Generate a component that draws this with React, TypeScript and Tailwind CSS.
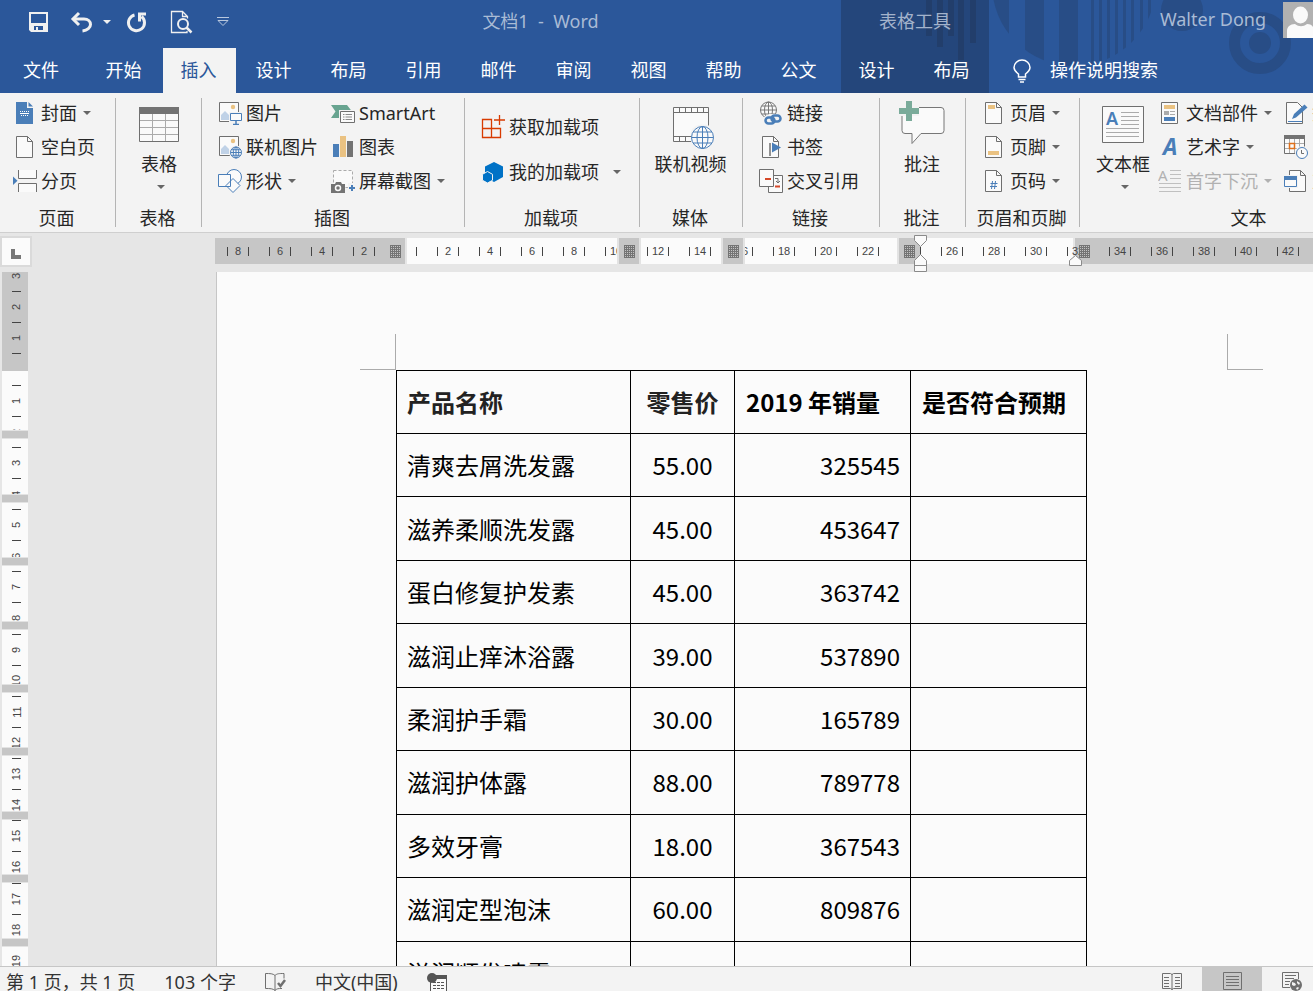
import type { ReactNode } from "react"

const BLUE = "#4a7eb8"
const GRAY = "#6f6f6f"
const YELLOW = "#eac282"

const tabs = ["开始", "插入", "设计", "布局", "引用", "邮件", "审阅", "视图", "帮助", "公文"]

const products = [
  { name: "清爽去屑洗发露", price: "55.00", sales: "325545" },
  { name: "滋养柔顺洗发露", price: "45.00", sales: "453647" },
  { name: "蛋白修复护发素", price: "45.00", sales: "363742" },
  { name: "滋润止痒沐浴露", price: "39.00", sales: "537890" },
  { name: "柔润护手霜", price: "30.00", sales: "165789" },
  { name: "滋润护体露", price: "88.00", sales: "789778" },
  { name: "多效牙膏", price: "18.00", sales: "367543" },
  { name: "滋润定型泡沫", price: "60.00", sales: "809876" },
  { name: "滋润顺发喷雾", price: "28.00", sales: "297876" },
]

const rulerX = [8, 6, 4, 2, 0, 2, 4, 6, 8, 10, 12, 14, 16, 18, 20, 22, 24, 26, 28, 30, 32, 34, 36, 38, 40, 42]
const rulerY = [3, 2, 1, 0, 1, 2, 3, 4, 5, 6, 7, 8, 9, 10, 11, 12, 13, 14, 15, 16, 17, 18, 19]

function Icon({ children }: { children: ReactNode }) {
  return (
    <svg width="24" height="24" viewBox="0 0 24 24" fill="none" className="shrink-0" aria-hidden="true">
      {children}
    </svg>
  )
}

function BigIcon({ children }: { children: ReactNode }) {
  return (
    <svg width="46" height="50" viewBox="0 0 46 50" fill="none" className="shrink-0" aria-hidden="true">
      {children}
    </svg>
  )
}

function Caret({ className = "" }: { className?: string }) {
  return (
    <svg width="8" height="4" viewBox="0 0 8 4" className={`shrink-0 ${className}`} aria-hidden="true">
      <path d="M0 0h8L4 4z" fill="currentColor" />
    </svg>
  )
}

function Doc() {
  return (
    <>
      <path d="M3.5 1.5h11l5 5v16h-16z" fill="#fafafa" stroke={GRAY} />
      <path d="M14.5 1.5v5h5" stroke={GRAY} />
    </>
  )
}

function Globe({ x, y, r, color }: { x: number; y: number; r: number; color: string }) {
  return (
    <g stroke={color} fill="none">
      <circle cx={x} cy={y} r={r} fill="#fafafa" />
      <ellipse cx={x} cy={y} rx={r / 2} ry={r} />
      <path d={`M${x} ${y - r}v${r * 2}M${x - r} ${y}h${r * 2}`} />
      <path d={`M${x - r * 0.85} ${y - r / 2}h${r * 1.7}M${x - r * 0.85} ${y + r / 2}h${r * 1.7}`} />
    </g>
  )
}

function Picture() {
  return (
    <>
      <path d="M1.5 1.5h19v19h-19z" fill="#fafafa" stroke={GRAY} />
      <circle cx="15" cy="6" r="2.2" fill={YELLOW} />
      <path d="M3 19v-5l4-4 4 4v5z" fill="#c0d2e7" />
    </>
  )
}

interface ToolProps {
  icon: ReactNode
  label: string
  menu?: boolean
  wide?: boolean
  disabled?: boolean
}

function Tool({ icon, label, menu, wide, disabled }: ToolProps) {
  return (
    <button
      disabled={disabled}
      className="flex h-[34px] items-center gap-1 whitespace-nowrap text-[#262626] disabled:text-[#b1b1b1]"
    >
      <Icon>{icon}</Icon>
      {label}
      {menu && <Caret className={wide ? "ml-[10px] text-[#666]" : disabled ? "ml-[2px]" : "ml-[2px] text-[#666]"} />}
    </button>
  )
}

function BigTool({ icon, label, menu }: ToolProps) {
  return (
    <button className="flex flex-col items-center pt-[5px] whitespace-nowrap">
      <BigIcon>{icon}</BigIcon>
      <span className="leading-[26px]">{label}</span>
      {menu && <Caret className="mt-2 ml-1 text-[#666]" />}
    </button>
  )
}

function Group({ label, className, children }: { label: string; className: string; children: ReactNode }) {
  return (
    <section aria-label={label} className={`relative flex shrink-0 flex-col ${className}`}>
      <div className="flex h-[111px] pt-[3px]">{children}</div>
      <h2 className="pr-[3px] text-center leading-[28px]">{label}</h2>
      <div className="absolute top-[5px] right-0 bottom-[5px] w-px bg-[#b4b4b4]" />
    </section>
  )
}

function HeaderArt() {
  return (
    <svg width="472" height="93" viewBox="841 0 472 93" className="absolute top-0 left-[841px]" aria-hidden="true">
      <defs>
        <clipPath id="disc">
          <circle cx="1074" cy="-16" r="82" />
        </clipPath>
      </defs>
      <path d="M841 0h148v93H841z" fill="#24467b" />
      <path
        d="M926 0h6v36h-6zM937 0h6v47h-6zM948 0h6v36h-6zM958 0h6v60h-6zM970 0h6v43h-6z"
        fill="#223e6b"
      />
      <g fill="#284d86">
        <path
          clipPath="url(#disc)"
          d="M990 0h19v90h-19zM1025 0h19v90h-19zM1059 0h19v90h-19zM1091 0h3v90h-3zM1099 0h3v90h-3zM1107 0h3v90h-3zM1115 0h3v90h-3zM1123 0h3v90h-3zM1131 0h3v90h-3zM1140 0h3v90h-3zM1148 0h3v90h-3z"
        />
        <circle cx="1182" cy="10" r="21" />
        <circle cx="1260" cy="43" r="11" />
      </g>
      <circle cx="1260" cy="43" r="25.5" fill="none" stroke="#284d86" strokeWidth="11" />
    </svg>
  )
}

function QuickAccess() {
  return (
    <div className="flex w-[240px] items-center pl-[28px] text-[#f0f0f0]">
      <button aria-label="保存">
        <svg width="20" height="20" viewBox="0 0 20 20">
          <path d="M1 0h19v20H3l-2-2zM3 2v9h15V2zM6 14v4h2v-3h2v3h5v-4z" fill="currentColor" fillRule="evenodd" />
        </svg>
      </button>
      <button aria-label="撤消" className="ml-[22px] flex items-center gap-[10px]">
        <svg width="23" height="22" viewBox="0 0 23 22" fill="none" stroke="currentColor" strokeWidth="3">
          <path d="M9 2L3 8l6 6" />
          <path d="M3 8h11c4 0 6.500 2.500 6.500 5.500S17.500 19.500 12.500 20" />
        </svg>
        <Caret />
      </button>
      <button aria-label="重复" className="ml-[15px]">
        <svg width="21" height="22" viewBox="0 0 21 22" fill="none" stroke="currentColor" strokeWidth="3">
          <path d="M8.500 4A8 8 0 1 0 15.500 5.500" />
          <path d="M13.500 10.500V3H20" />
        </svg>
      </button>
      <button aria-label="打印预览" className="ml-[23px]">
        <svg width="23" height="24" viewBox="0 0 23 24" fill="none" stroke="currentColor">
          <path d="M17 21v1.500H1.500V1.500h11l5 5v2M12.500 1.500v5h5" strokeWidth="1.300" />
          <circle cx="13" cy="14" r="5" strokeWidth="2" />
          <path d="M16.500 17.500l5 5" strokeWidth="2.500" />
        </svg>
      </button>
      <button aria-label="自定义快速访问工具栏" className="ml-[24px] text-[#b9c8de]">
        <svg width="12" height="10" viewBox="0 0 12 10" fill="none" stroke="currentColor">
          <path d="M0 .500h12M1 3.500h10L6 8.500z" />
        </svg>
      </button>
    </div>
  )
}

function Header() {
  return (
    <header className="relative flex h-[93px] shrink-0 overflow-hidden bg-[#2b579a] text-white">
      <HeaderArt />
      <div className="relative flex w-[841px] shrink-0 flex-col">
        <div className="flex h-12 pb-[5px]">
          <QuickAccess />
          <h1 className="flex-1 self-center text-center whitespace-pre text-[#a9bbd5]">文档1  -  Word</h1>
        </div>
        <nav className="flex flex-1 gap-[2px]">
          <button className="mr-1 w-[82px]">文件</button>
          {tabs.map((tab) => (
            <button key={tab} className={tab === "插入" ? "w-[73px] bg-[#f3f3f3] pr-[2px] text-[#2b579a]" : "w-[73px] pr-[2px]"}>
              {tab}
            </button>
          ))}
        </nav>
      </div>
      <div className="relative flex w-[148px] shrink-0 flex-col">
        <p className="h-12 pb-[5px] text-center leading-[43px] text-[#a3b3cb]">表格工具</p>
        <div className="flex flex-1 gap-[2px]">
          <button className="w-[73px] pr-[2px]">设计</button>
          <button className="w-[73px] pr-[2px]">布局</button>
        </div>
      </div>
      <div className="relative flex min-w-0 flex-1 flex-col">
        <div className="flex h-12 justify-end gap-[17px]">
          <span className="leading-[38px] text-[#a9bbd5]">Walter Dong</span>
          <svg width="30" height="36" viewBox="0 0 30 36" className="mt-[2px]" role="img" aria-label="Walter Dong">
            <path d="M0 0h30v36H0z" fill="#b1b1b1" />
            <ellipse cx="17.500" cy="13" rx="7.500" ry="8.500" fill="#fafafa" />
            <path d="M4 36v-7c0-4 3-7 8-7 4 3 8 3 12 0 3 0 5 1 6 3v11z" fill="#fafafa" />
          </svg>
        </div>
        <label className="flex flex-1 items-center gap-[19px] pl-[24px]">
          <svg width="18" height="24" viewBox="0 0 18 24" fill="none" stroke="white" strokeWidth="1.500" aria-hidden="true">
            <path d="M5.500 18v-3C3 13 1 11 1 8.500a8 7.500 0 0 1 16 0C17 11 15 13 12.500 15v3zM5.500 20.500h7M7 23h4" />
          </svg>
          <input
            aria-label="操作说明搜索"
            placeholder="操作说明搜索"
            className="w-[160px] bg-transparent outline-none placeholder:text-white"
          />
        </label>
      </div>
    </header>
  )
}

function Ribbon() {
  return (
    <div className="flex h-[140px] shrink-0 overflow-hidden border-b border-[#cfcfcf] bg-[#f3f3f3] text-[#262626]">
      <Group label="页面" className="w-[116px]">
        <div className="pl-[13px]">
          <Tool
            label="封面"
            menu
            icon={
              <>
                <path d="M3 1h11v6h6v16H3z" fill={BLUE} />
                <path d="M15.500 1L20 5.500h-4.500z" fill={BLUE} />
                <path d="M7 10.500h9M8 14.500h7" stroke="white" strokeDasharray="1 1" />
                <path d="M7 12.500h9" stroke="white" />
              </>
            }
          />
          <Tool label="空白页" icon={<Doc />} />
          <Tool
            label="分页"
            icon={
              <>
                <path d="M5.500 1v8.500h18V1M5.500 23v-8.500h18V23" fill="#fafafa" stroke={GRAY} />
                <path d="M0 7.500l4.500 4.200L0 16z" fill={BLUE} />
              </>
            }
          />
        </div>
      </Group>

      <Group label="表格" className="w-[86px]">
        <div className="flex flex-1 justify-center">
          <BigTool
            label="表格"
            menu
            icon={
              <>
                <path d="M3.500 6.500h39v34h-39z" fill="#fafafa" stroke={GRAY} />
                <path d="M16.500 13v27M29.500 13v27M4 19.500h38M4 26.500h38M4 33.500h38" stroke="#ababab" />
                <path d="M3 6h40v7H3z" fill="#737373" />
              </>
            }
          />
        </div>
      </Group>

      <Group label="插图" className="w-[263px]">
        <div className="pl-4">
          <Tool
            label="图片"
            icon={
              <>
                <Picture />
                <path d="M11 11h13v13H11z" fill="#f3f3f3" />
                <path d="M12.500 12.500h11v7h-11z" fill="#fafafa" stroke={BLUE} />
                <path d="M18 20v3M15 23.500h6" stroke={BLUE} strokeWidth="1.500" />
              </>
            }
          />
          <Tool
            label="联机图片"
            icon={
              <>
                <Picture />
                <circle cx="18" cy="17.500" r="7" fill="#f3f3f3" />
                <Globe x={18} y={17.5} r={5.5} color={BLUE} />
              </>
            }
          />
          <Tool
            label="形状"
            menu
            icon={
              <g fill="#fafafa" stroke={BLUE}>
                <circle cx="16" cy="8" r="7.500" />
                <path d="M.500 5.500h12v12H.500zM15 9.500l7 7-7 7-7-7z" />
              </g>
            }
          />
        </div>
        <div className="pl-[13px]">
          <Tool
            label="SmartArt"
            icon={
              <>
                <path d="M0 4h16l5 6.500-5 6.500H0l4.500-6.500z" fill="#68a490" />
                <path d="M8 9h16v14H8z" fill="#f3f3f3" />
                <path d="M9.500 10.500h14v11h-14z" fill="#fafafa" stroke={GRAY} />
                <path d="M12 13.500h1.500m1 0H21M12 16h1.500m1 0H21M12 18.500h1.500m1 0H21" stroke="#8a8a8a" />
              </>
            }
          />
          <Tool
            label="图表"
            icon={
              <>
                <path d="M2 9h6v13H2z" fill={BLUE} />
                <path d="M9 1h6v21H9z" fill={YELLOW} />
                <path d="M16 6h6v16h-6z" fill="#737373" />
              </>
            }
          />
          <Tool
            label="屏幕截图"
            menu
            icon={
              <>
                <path d="M2.500 1.500h19v17h-19z" fill="#fafafa" stroke="#ababab" strokeDasharray="3 2" />
                <path d="M0 15h4l1-2h5l1 2h3v9H0z" fill="#737373" />
                <circle cx="7" cy="19" r="2.500" stroke="#fafafa" strokeWidth="1.500" />
                <path d="M17 14h7v10h-7z" fill="#f3f3f3" />
                <path d="M18 19h6M21 16v6" stroke={BLUE} strokeWidth="2" />
              </>
            }
          />
        </div>
      </Group>

      <Group label="加载项" className="w-[175px]">
        <div className="flex flex-col gap-[11px] pt-[14px] pl-4">
          <Tool
            label="获取加载项"
            icon={
              <path
                d="M1.500 4.500h9v9h-9zM1.500 13.500h9v9h-9zM10.500 13.500h9v9h-9zM18.500 0v10M13 5h11"
                stroke="#d83b01"
                strokeWidth="1.300"
              />
            }
          />
          <Tool
            label="我的加载项"
            menu
            wide
            icon={
              <>
                <path d="M13 2l9 4.500v10.500l-9 5-9-5V6.500z" fill="#0072c6" />
                <path d="M6.500 11.500l5 2.800v6l-5 2.700-5-2.700v-6z" fill="#0072c6" stroke="#f3f3f3" />
              </>
            }
          />
        </div>
      </Group>

      <Group label="媒体" className="w-[103px]">
        <div className="flex flex-1 justify-center pr-[2px]">
          <BigTool
            label="联机视频"
            icon={
              <>
                <path d="M5.500 6.500h35v34h-35z" fill="#fafafa" stroke={GRAY} />
                <path d="M5 11.500h36M5 35.500h36" stroke={GRAY} />
                <path
                  d="M11.500 7v4M17.500 7v4M23.500 7v4M29.500 7v4M35.500 7v4M11.500 36v4M17.500 36v4"
                  stroke={GRAY}
                />
                <path d="M23 47V30c3-6 11-8 19-5v22z" fill="#f3f3f3" />
                <Globe x={34.5} y={36.5} r={11} color={BLUE} />
              </>
            }
          />
        </div>
      </Group>

      <Group label="链接" className="w-[137px]">
        <div className="pl-4">
          <Tool
            label="链接"
            icon={
              <>
                <Globe x={9.5} y={9} r={8} color="#777" />
                <path d="M5 16l5-3h14v11H6z" fill="#f3f3f3" />
                <rect x="6.500" y="16.500" width="9" height="6" rx="3" stroke={BLUE} strokeWidth="2.500" />
                <rect x="12.500" y="14.500" width="9" height="6" rx="3" stroke={BLUE} strokeWidth="2.500" />
              </>
            }
          />
          <Tool
            label="书签"
            icon={
              <>
                <Doc />
                <path d="M11 8v13" stroke={GRAY} strokeWidth="1.500" />
                <path d="M13 7.500l9 5-9 5z" fill={BLUE} />
              </>
            }
          />
          <Tool
            label="交叉引用"
            icon={
              <>
                <path d="M9.500 6.500h14v17h-14z" fill="#fafafa" stroke={GRAY} />
                <path d="M.500.500h14v17H.500z" fill="#fafafa" stroke={GRAY} />
                <path d="M6 10h6M16 17.500h5" stroke="#d6492a" strokeWidth="2" />
                <path d="M16 9.500h3v4M17 12l2 2 2-2" stroke={GRAY} />
              </>
            }
          />
        </div>
      </Group>

      <Group label="批注" className="w-[86px]">
        <div className="flex flex-1 justify-center pr-[2px]">
          <BigTool
            label="批注"
            icon={
              <>
                <path
                  d="M6 6.500h36a3 3 0 0 1 3 3v20a3 3 0 0 1-3 3H22l-9 10v-10H6a3 3 0 0 1-3-3v-20a3 3 0 0 1 3-3z"
                  fill="#fafafa"
                  stroke="#777"
                />
                <path d="M2 5h18v10H2z" fill="#f3f3f3" />
                <path d="M7 0h6v7h7v6h-7v7H7v-7H0V7h7z" fill="#7aab9a" />
              </>
            }
          />
        </div>
      </Group>

      <Group label="页眉和页脚" className="w-[114px]">
        <div className="pl-4">
          <Tool
            label="页眉"
            menu
            icon={
              <>
                <Doc />
                <path d="M6 4h7v4H6z" fill={YELLOW} />
              </>
            }
          />
          <Tool
            label="页脚"
            menu
            icon={
              <>
                <Doc />
                <path d="M6 16h11v4H6z" fill={YELLOW} />
              </>
            }
          />
          <Tool
            label="页码"
            menu
            icon={
              <>
                <Doc />
                <path d="M10.500 12l-1 8M13.500 12l-1 8M8.500 14.500h7M8 17.500h7" stroke={BLUE} />
              </>
            }
          />
        </div>
      </Group>

      <Group label="文本" className="w-[340px]">
        <div className="flex w-[86px] justify-center">
          <BigTool
            label="文本框"
            menu
            icon={
              <>
                <path d="M2.500 5.500h41v36h-41z" fill="#fafafa" stroke={GRAY} />
                <text x="6" y="24" fontSize="18" fontWeight="600" fill={BLUE}>
                  A
                </text>
                <path
                  d="M21 11.500h18M21 15.500h18M21 19.500h18M21 23.500h18M6 27.500h33M6 31.500h33M6 35.500h33"
                  stroke="#ababab"
                />
              </>
            }
          />
        </div>
        <div className="w-[118px] shrink-0 -ml-2">
          <Tool
            label="文档部件"
            menu
            icon={
              <>
                <path d="M3.500 1.500h16v21h-16z" fill="#fafafa" stroke={GRAY} />
                <path d="M6 4h11v4H6z" fill={YELLOW} />
                <path d="M6 10h5v4H6z" fill="#ababab" />
                <path d="M12 10.500h5M12 13.500h5" stroke="#ababab" />
                <path d="M6 16h11v4H6z" fill={BLUE} />
              </>
            }
          />
          <Tool
            label="艺术字"
            menu
            icon={
              <text x="5" y="20" fontSize="23" fontWeight="700" fontStyle="italic" fill={BLUE}>
                A
              </text>
            }
          />
          <Tool
            label="首字下沉"
            menu
            disabled
            icon={
              <>
                <text x="0" y="12" fontSize="15" fill="#b1b1b1">
                  A
                </text>
                <path
                  d="M12 1.500h11M12 5.500h11M12 9.500h11M1 14.500h22M1 18.500h22M1 22.500h22"
                  stroke="#c0c0c0"
                />
              </>
            }
          />
        </div>
        <div className="pl-2">
          <Tool
            label="签名行"
            menu
            icon={
              <>
                <path d="M2.500 1.500h11l5 5v16h-16z" fill="#fafafa" stroke={GRAY} />
                <path d="M4 20.500h14" stroke={BLUE} />
                <path d="M8 18l2-5L20.500 3.500l3 3L12 16.500z" fill={BLUE} />
              </>
            }
          />
          <Tool
            label="日期和时间"
            icon={
              <>
                <path d="M.500 1h20v17.500H.500z" fill="#fafafa" stroke={GRAY} />
                <path d="M5.500 4v14M10.500 4v14M15.500 4v14M1 8.500h19M1 13.500h19" stroke="#ababab" />
                <path d="M0 0h21v4H0z" fill="#737373" />
                <path d="M5.500 8.500h5v5h-5z" stroke="#e0701a" strokeWidth="1.500" />
                <circle cx="18" cy="18" r="7" fill="#f3f3f3" />
                <circle cx="18" cy="18" r="5.500" fill="#fafafa" stroke={BLUE} />
                <path d="M17.500 15v3.500H20" stroke={GRAY} />
              </>
            }
          />
          <Tool
            label="对象"
            menu
            icon={
              <>
                <path d="M5.500 1.500h11l5 5v16h-16zM16.500 1.500v5h5" fill="#fafafa" stroke={GRAY} />
                <path d="M0 6h14v13H0z" fill="#f3f3f3" />
                <path d="M.500 8.500h12v9H.500z" fill="#fafafa" stroke={BLUE} />
                <path d="M0 7h13v4H0z" fill={BLUE} />
              </>
            }
          />
        </div>
      </Group>
    </div>
  )
}

function ColumnMarker({ className = "" }: { className?: string }) {
  return (
    <svg width="11" height="13" viewBox="0 0 11 13" className={`shrink-0 ${className}`} aria-hidden="true">
      <path d="M0 0h11v13H0z" fill="#747474" />
      <path
        d="M0 1.500h11M0 3.500h11M0 5.500h11M0 7.500h11M0 9.500h11M0 11.500h11"
        stroke="#c2c2c2"
        strokeDasharray="1 1"
        strokeDashoffset="1"
      />
    </svg>
  )
}

function HorizontalRuler() {
  return (
    <div className="relative mt-[5px] h-[26px] min-w-0 flex-1">
      <div className="flex h-full">
        <div className="w-[190px] shrink-0 bg-[#c6c6c6]" />
        <div className="mx-[2px] w-[666px] shrink-0 bg-[#fbfbfb]" />
        <div className="flex-1 bg-[#c6c6c6]" />
      </div>
      {/* scale: one 42px cell for every two units */}
      <div className="absolute inset-0 flex overflow-hidden pl-[12px]">
        {rulerX.map((n, i) => (
          <div key={i} className="flex w-[42px] shrink-0 items-center">
            <i className="h-[9px] w-px bg-[#444]" />
            <span className="w-5 text-center text-[11px] text-[#444]">{n > 0 && n}</span>
            <i className="h-[9px] w-px bg-[#444]" />
          </div>
        ))}
      </div>
      {/* table column boundaries */}
      <div className="absolute inset-0 flex items-center overflow-hidden">
        <div className="ml-[170px] flex h-full w-5 shrink-0 items-center justify-center bg-[#c6c6c6]">
          <ColumnMarker />
        </div>
        <div className="ml-[212px] flex h-full w-6 shrink-0 items-center justify-center border-x-2 border-[#e3e3e3] bg-[#c6c6c6]">
          <ColumnMarker />
        </div>
        <div className="ml-[80px] flex h-full w-6 shrink-0 items-center justify-center border-x-2 border-[#e3e3e3] bg-[#c6c6c6]">
          <ColumnMarker />
        </div>
        <div className="ml-[152px] flex h-full w-[23px] shrink-0 items-center justify-center border-l-2 border-[#e3e3e3] bg-[#c6c6c6]">
          <ColumnMarker />
        </div>
        <ColumnMarker className="ml-[159px]" />
      </div>
      <svg
        width="14"
        height="38"
        viewBox="0 0 14 38"
        fill="#fafafa"
        stroke="#8a8a8a"
        className="absolute -top-[3px] left-[699px]"
        aria-hidden="true"
      >
        <path d="M.500.500h12v5l-6 6-6-6zM.500 36.500v-11l6-6 6 6v11zM.500 30.500h12" />
        <path d="M6.500 12v7" stroke="#444" />
      </svg>
      <svg
        width="13"
        height="12"
        viewBox="0 0 13 12"
        fill="#fafafa"
        stroke="#8a8a8a"
        className="absolute top-[17px] left-[854px]"
        aria-hidden="true"
      >
        <path d="M.500 10.500v-5l6-5 6 5v5z" />
      </svg>
    </div>
  )
}

function VerticalRuler() {
  return (
    <div className="relative mx-[2px] w-[26px] shrink-0 overflow-hidden bg-[#fbfbfb]">
      <div className="h-[99px] bg-[#c6c6c6]" />
      <div className="absolute inset-x-0 -top-[11px] flex h-[716px] flex-col">
        {rulerY.map((n, i) => (
          <div key={i} className="flex flex-1 flex-col items-center">
            <span className="flex w-full flex-1 items-center justify-center pl-[3px]">
              <span className="-rotate-90 text-[11px] leading-3 text-[#444]">{n > 0 && n}</span>
            </span>
            <i className="ml-[3px] h-px w-[9px] bg-[#444]" />
          </div>
        ))}
      </div>
      {/* table row boundaries */}
      <div className="absolute inset-x-0 top-[104px] flex h-[634px] flex-col">
        {[...products, null].map((_, i) => (
          <div key={i} className="flex flex-1 flex-col justify-end">
            <div className="h-[9px] border-y border-[#e3e3e3] bg-[#c6c6c6]" />
          </div>
        ))}
      </div>
    </div>
  )
}

function SalesTable() {
  return (
    <table className="ml-[179px] h-[635px] w-[691px] table-fixed border-collapse text-2xl text-black">
      <colgroup>
        <col className="w-[234px]" />
        <col className="w-[104px]" />
        <col className="w-[176px]" />
        <col className="w-[176px]" />
      </colgroup>
      <thead>
        <tr className="h-[63px] text-left whitespace-nowrap">
          <th className="border border-black px-[10px] font-bold text-[#222]">产品名称</th>
          <th className="border border-black text-center font-bold text-[#222]">零售价</th>
          <th className="border border-black px-[11px] font-bold">2019 年销量</th>
          <th className="border border-black px-[11px] font-bold">是否符合预期</th>
        </tr>
      </thead>
      <tbody>
        {products.map((product) => (
          <tr key={product.name}>
            <td className="border border-black px-[10px]">{product.name}</td>
            <td className="border border-black text-center">{product.price}</td>
            <td className="border border-black px-[10px] text-right">{product.sales}</td>
            <td className="border border-black" />
          </tr>
        ))}
      </tbody>
    </table>
  )
}

function StatusBar() {
  return (
    <footer className="flex h-[25px] shrink-0 items-start overflow-hidden border-t border-[#c6c6c6] bg-[#f3f3f3] leading-[30px] text-[#333]">
      <div className="flex gap-[29px] pl-[6px] whitespace-nowrap">
        <span>第 1 页，共 1 页</span>
        <span>103 个字</span>
        <button aria-label="校对">
          <svg width="21" height="18" viewBox="0 0 21 18" fill="none" stroke={GRAY}>
            <path d="M10 2.500C8 .500 5 .500.500.500v15c4.500 0 7.500 0 9.500 2 2-2 3-2 7-2M10 2.500v15M10 2.500c2-2 4-2 9-2v5" />
            <path d="M13 10l2.500 3L20 7" strokeWidth="2.500" />
          </svg>
        </button>
        <button>中文(中国)</button>
        <button aria-label="宏录制">
          <svg width="21" height="19" viewBox="0 0 21 19" fill="none">
            <path d="M3.500 3.500h16v15h-16z" fill="#fafafa" stroke="#555" />
            <path d="M9 2h11v4H9z" fill="#555" />
            <path d="M6 9.500h12M6 12.500h12M6 15.500h12" stroke="#555" strokeDasharray="3 1" />
            <circle cx="5" cy="5" r="5" fill="#555" />
          </svg>
        </button>
      </div>
      <div className="ml-auto flex h-full">
        <button aria-label="阅读视图" className="flex w-[60px] justify-center pt-[5px]">
          <svg width="20" height="18" viewBox="0 0 20 18" fill="none" stroke={GRAY}>
            <path d="M.500 1.500h8l1.500 1 1.500-1h8v15h-8l-1.500 1-1.500-1h-8zM10 2v16" />
            <path d="M2 5.500h5M2 8.500h5M2 11.500h5M2 14.500h5M13 5.500h5M13 8.500h5M13 11.500h5M13 14.500h5" />
          </svg>
        </button>
        <button aria-label="页面视图" className="flex w-[60px] justify-center bg-[#c6c6c6] pt-[5px]">
          <svg width="19" height="18" viewBox="0 0 19 18" fill="none" stroke={GRAY}>
            <path d="M.500.500h18v17H.500zM3 4.500h13M3 7.500h13M3 10.500h13M3 13.500h13" />
          </svg>
        </button>
        <button aria-label="Web 版式视图" className="flex w-[51px] pt-[5px] pl-5">
          <svg width="20" height="19" viewBox="0 0 20 19" fill="none" stroke={GRAY}>
            <path d="M8 15.500H.500V.500h16V7M3 3.500h11M3 6.500h9M3 9.500h5M3 12.500h4" />
            <circle cx="14" cy="13" r="6" fill={GRAY} stroke="none" />
            <path d="M10 10l3 1 1 2-2 1-2-1zM15 9l3 2-1 2-2-2zM14 16l2-1 1 1-2 2z" fill="#f3f3f3" stroke="none" />
          </svg>
        </button>
      </div>
    </footer>
  )
}

export default function App() {
  return (
    <div className="flex h-screen flex-col overflow-hidden bg-[#e6e6e6] font-['Noto_Sans','Noto_Sans_CJK_SC',sans-serif] text-[18px]">
      <Header />
      <Ribbon />
      <div className="flex h-[39px] shrink-0 font-['Liberation_Sans',sans-serif]">
        <div className="w-[215px] shrink-0 pt-[3px]">
          <button
            aria-label="左对齐式制表符"
            className="flex h-[31px] w-[32px] items-center justify-center border-2 border-[#dadada] bg-[#fbfbfb]"
          >
            <span className="mt-1 h-[10px] w-[10px] border-b-4 border-l-4 border-[#777]" />
          </button>
        </div>
        <HorizontalRuler />
      </div>
      <main className="flex min-h-0 flex-1">
        <div className="flex w-[216px] shrink-0 font-['Liberation_Sans',sans-serif]">
          <VerticalRuler />
        </div>
        <div className="min-w-0 flex-1 overflow-hidden border-l border-[#c6c6c6] bg-[#fbfbfb] pt-[62px] font-['Noto_Sans_CJK_SC',sans-serif]">
          <div className="flex gap-[831px] pl-[143px]">
            <div className="h-9 w-9 shrink-0 border-r border-b border-[#ababab]" />
            <div className="h-9 w-9 shrink-0 border-b border-l border-[#ababab]" />
          </div>
          <SalesTable />
        </div>
      </main>
      <StatusBar />
    </div>
  )
}
